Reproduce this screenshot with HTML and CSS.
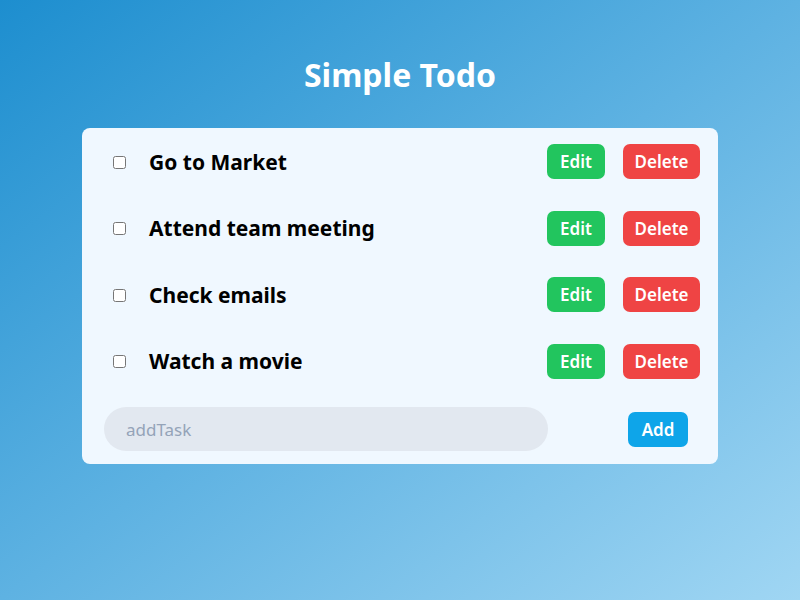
FILE: index.html
```html
<!DOCTYPE html>
<html>
<head>
<meta charset="utf-8">
<link rel="stylesheet" href="styles.css">
</head>
<body>
<main class="page">
  <h1 class="title">Simple Todo</h1>
  <section class="card">
    <ul class="list">
      <li class="row"><input type="checkbox" class="check"><span class="task">Go to Market</span><button class="btn edit">Edit</button><button class="btn del">Delete</button></li>
      <li class="row"><input type="checkbox" class="check"><span class="task">Attend team meeting</span><button class="btn edit">Edit</button><button class="btn del">Delete</button></li>
      <li class="row"><input type="checkbox" class="check"><span class="task">Check emails</span><button class="btn edit">Edit</button><button class="btn del">Delete</button></li>
      <li class="row"><input type="checkbox" class="check"><span class="task">Watch a movie</span><button class="btn edit">Edit</button><button class="btn del">Delete</button></li>
    </ul>
    <div class="addrow">
      <input class="field" type="text" placeholder="addTask">
      <button class="btn add">Add</button>
    </div>
  </section>
</main>
</body>
</html>
```
FILE: styles.css
```css
html, body { margin: 0; height: 100%; }
body {
  font-family: "Noto Sans", "Open Sans", sans-serif;
  background: linear-gradient(to bottom right, #1d8ecf 0%, #5eb2e2 50%, #a0d6f3 100%);
  min-height: 600px;
}
.page { display: flex; flex-direction: column; align-items: center; padding-top: 53px; }
.title { margin: 0 0 31px; color: #fff; font-size: 32px; font-weight: 700; line-height: 44px; }
.card {
  box-sizing: border-box;
  width: 636px;
  background: #f0f8ff;
  border-radius: 8px;
  padding: 16px 18px 13px 22px;
}
.list { list-style: none; margin: 0; padding: 0; display: flex; flex-direction: column; gap: 31.5px; }
.row { display: flex; align-items: center; height: 35px; padding-left: 9px; }
.check { width: 13px; height: 13px; margin: 1px 23px 0 0; }
.task { flex: 1; font-size: 21px; font-weight: 700; color: #000; }
.btn {
  border: none; color: #fff; font-family: inherit; font-size: 17px; font-weight: 600;
  height: 35px; border-radius: 7px; padding: 0; cursor: pointer;
}
.edit { background: #22c55e; width: 58px; }
.del { background: #ef4444; width: 77px; margin-left: 18px; }
.addrow { display: flex; align-items: center; margin-top: 28.5px; }
.field {
  box-sizing: border-box; width: 444px; height: 44px; border: none; border-radius: 22px;
  background: #e2e8f0; padding: 0 22px; font-family: inherit; font-size: 17px; outline: none;
}
.field::placeholder { color: #94a3b8; }
.add { background: #0ea5e9; width: 60px; margin-left: auto; margin-right: 12px; }
```
